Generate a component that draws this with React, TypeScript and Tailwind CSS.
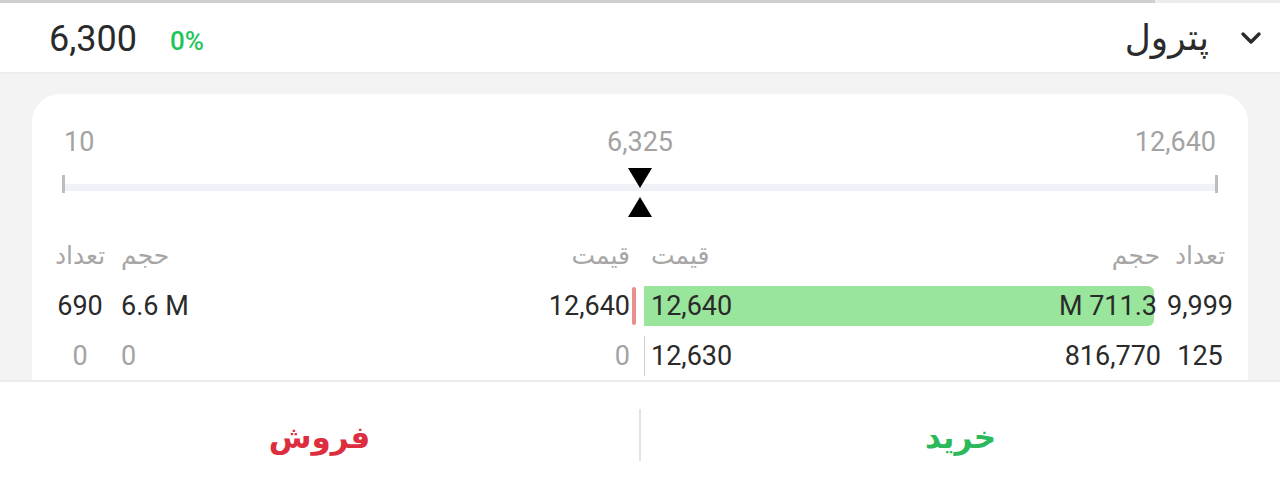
import React from "react";

const FONT = "font-['Roboto','DejaVu_Sans',sans-serif]";

function Chevron() {
  return (
    <svg width="24" height="24" viewBox="0 0 24 24" className="block">
      <polyline points="4,8 12,16 20,8" fill="none" stroke="#2b2b2b" strokeWidth="3.4" strokeLinecap="round" strokeLinejoin="round" />
    </svg>
  );
}

function Triangle({ up }: { up?: boolean }) {
  return (
    <svg width="24" height="20" viewBox="0 0 24 20" className="block">
      {up ? <polygon points="12,0 24,20 0,20" fill="#000" /> : <polygon points="0,0 24,0 12,20" fill="#000" />}
    </svg>
  );
}

export default function App() {
  return (
    <div className={`${FONT} w-[1280px] h-[495px] flex flex-col bg-white overflow-hidden`}>
      {/* top progress */}
      <div className="h-[3px] flex shrink-0">
        <div className="w-[1155px] bg-[#cfcfcf]" />
        <div className="flex-1 bg-[#ededed]" />
      </div>
      {/* header */}
      <div className="h-[71px] shrink-0 flex items-center border-b-2 border-[#ececec] bg-white">
        <div className="pl-[49px] mt-[2px] text-[36px] leading-none text-[#2a2a2a]">6,300</div>
        <div className="ml-[33px] mt-[6px] text-[26px] leading-none text-[#1fc45b] font-medium">0%</div>
        <div className="flex-1" />
        <div className="text-[36px] leading-none text-[#2b2b2b]" dir="rtl">پترول</div>
        <div className="ml-[30px] mr-[17px]">
          <Chevron />
        </div>
      </div>
      {/* gray area */}
      <div className="h-[306px] shrink-0 bg-[#f3f3f3] px-[32px] pt-[20px] overflow-hidden">
        <div className="bg-white rounded-[28px] h-[400px]">
          {/* slider */}
          <div className="px-[30px] pt-[32px]">
            <div className="grid grid-cols-3 text-[27px] leading-[32px] text-[#a3a3a3]">
              <div className="pl-[2px] text-left">10</div>
              <div className="text-center">6,325</div>
              <div className="pr-[2px] text-right">12,640</div>
            </div>
            <div className="relative h-[50px] mt-[10px]">
              <div className="absolute left-0 right-0 top-[16px] h-[7px] bg-[#eef1f7]" />
              <div className="absolute left-0 top-[7px] w-[3px] h-[18px] bg-[#bdbdbd]" />
              <div className="absolute right-0 top-[7px] w-[3px] h-[18px] bg-[#bdbdbd]" />
              <div className="absolute left-[566px] top-0">
                <Triangle />
              </div>
              <div className="absolute left-[566px] top-[29px]">
                <Triangle up />
              </div>
            </div>
          </div>
          {/* order book */}
          <div className="pl-[22px] mt-[18px] flex flex-col gap-[10px]">
            {/* headers */}
            <div className="flex h-[40px] items-center text-[25px] text-[#a6a6a6]">
              <div className="w-[590px] flex items-center">
                <div className="w-[52px] text-center" dir="rtl">تعداد</div>
                <div className="ml-[15px] flex-1 text-left" dir="rtl">حجم</div>
                <div className="text-right" dir="rtl">قیمت</div>
                <div className="w-[14px]" />
              </div>
              <div className="w-[519px] flex items-center pl-[7px]">
                <div className="flex-1 text-left" dir="rtl">قیمت</div>
                <div className="pr-[3px]" dir="rtl">حجم</div>
              </div>
              <div className="w-[74px] text-center" dir="rtl">تعداد</div>
            </div>
            {/* row 1 */}
            <div className="flex h-[40px] items-center text-[27px] text-[#2a2a2a]">
              <div className="w-[590px] h-full flex items-center">
                <div className="w-[52px] text-center">690</div>
                <div className="ml-[15px] flex-1 text-left">6.6 M</div>
                <div className="text-right">12,640</div>
                <div className="w-[14px] h-full flex items-center">
                  <div className="ml-[2px] w-[4px] h-[38px] rounded-[2px] bg-[#ea8f8b]" />
                </div>
              </div>
              <div className="relative w-[519px] h-full flex items-center pl-[7px]">
                <div className="absolute left-0 top-0 h-full rounded-r-[6px] bg-[#98e59b]" style={{ width: 510 }} />
                <div className="relative flex-1">12,640</div>
                <div className="relative pr-[6px]">M 711.3</div>
              </div>
              <div className="w-[74px] text-center">9,999</div>
            </div>
            {/* row 2 */}
            <div className="flex h-[40px] items-center text-[27px] text-[#2a2a2a]">
              <div className="w-[590px] h-full flex items-center">
                <div className="w-[52px] text-center text-[#a3a3a3]">0</div>
                <div className="ml-[15px] flex-1 text-left text-[#a3a3a3]">0</div>
                <div className="text-right text-[#a3a3a3]">0</div>
                <div className="w-[14px]" />
              </div>
              <div className="w-[519px] h-full flex items-center pl-[6px] border-l border-[#cfcfcf]">
                <div className="flex-1">12,630</div>
                <div className="pr-[2px]">816,770</div>
              </div>
              <div className="w-[74px] text-center">125</div>
            </div>
          </div>
        </div>
      </div>
      {/* bottom bar */}
      <div className="flex-1 border-t-2 border-[#ececec] bg-white flex items-center">
        <div className="flex-1 text-center text-[31px] font-bold text-[#dc2e3e]" dir="rtl">
          فروش
        </div>
        <div className="w-[2px] h-[52px] bg-[#e3e3e3] mt-[-8px]" />
        <div className="flex-1 text-center text-[31px] font-bold text-[#2bb95b]" dir="rtl">
          خرید
        </div>
      </div>
    </div>
  );
}
